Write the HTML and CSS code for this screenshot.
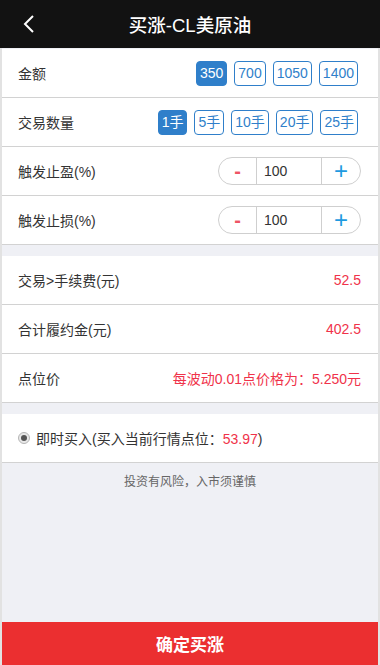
FILE: index.html
```html
<!DOCTYPE html>
<html lang="zh-CN">
<head>
<meta charset="utf-8">
<meta name="viewport" content="width=device-width, initial-scale=1">
<title>买涨-CL美原油</title>
<link rel="stylesheet" href="styles.css">
</head>
<body>
<div class="page">
  <header class="topbar">
    <span class="back">
      <svg width="12" height="20" viewBox="0 0 12 20"><path d="M10 2 L2 10 L10 18" fill="none" stroke="#fff" stroke-width="2"/></svg>
    </span>
    <h1 class="title">买涨-CL美原油</h1>
  </header>
  <main class="main">
    <section class="group">
      <div class="row">
        <span class="label">金额</span>
        <div class="chips">
          <span class="chip active">350</span>
          <span class="chip">700</span>
          <span class="chip">1050</span>
          <span class="chip">1400</span>
        </div>
      </div>
      <div class="row">
        <span class="label">交易数量</span>
        <div class="chips">
          <span class="chip active">1手</span>
          <span class="chip">5手</span>
          <span class="chip">10手</span>
          <span class="chip">20手</span>
          <span class="chip">25手</span>
        </div>
      </div>
      <div class="row">
        <span class="label">触发止盈(%)</span>
        <div class="stepper">
          <span class="step minus">-</span>
          <span class="step-value">100</span>
          <span class="step plus">+</span>
        </div>
      </div>
      <div class="row">
        <span class="label">触发止损(%)</span>
        <div class="stepper">
          <span class="step minus">-</span>
          <span class="step-value">100</span>
          <span class="step plus">+</span>
        </div>
      </div>
    </section>
    <section class="group">
      <div class="row">
        <span class="label">交易&gt;手续费(元)</span>
        <span class="value">52.5</span>
      </div>
      <div class="row">
        <span class="label">合计履约金(元)</span>
        <span class="value">402.5</span>
      </div>
      <div class="row">
        <span class="label">点位价</span>
        <span class="value">每波动0.01点价格为：5.250元</span>
      </div>
    </section>
    <section class="group">
      <div class="row radio-row">
        <span class="radio"><span class="radio-dot"></span></span>
        <span class="label">即时买入(买入当前行情点位：<span class="red">53.97</span>)</span>
      </div>
    </section>
    <p class="notice">投资有风险，入市须谨慎</p>
    <button class="submit">确定买涨</button>
  </main>
</div>
</body>
</html>
```
FILE: styles.css
```css
* { box-sizing: border-box; }
html, body { margin: 0; padding: 0; }
body {
  font-family: "Liberation Sans", "Noto Sans CJK SC", sans-serif;
  background: #eff0f5;
  color: #333;
}
.page {
  display: flex;
  flex-direction: column;
  min-height: 100vh;
}
.topbar {
  height: 48px;
  background: #121212;
  display: flex;
  align-items: center;
  justify-content: center;
  position: relative;
}
.back {
  position: absolute;
  left: 23px;
  top: 14px;
  display: flex;
}
.title {
  margin: 0;
  color: #fff;
  font-size: 18.5px;
  font-weight: 500;
}
.main {
  flex: 1;
  display: flex;
  flex-direction: column;
  border-left: 2px solid #e2e2e2;
  border-right: 2px solid #e2e2e2;
}
.group {
  background: #fff;
  margin-bottom: 11px;
}
.group:first-child { margin-top: 1px; }
.row {
  height: 49px;
  border-bottom: 1px solid #d2d2d2;
  display: flex;
  align-items: center;
  justify-content: space-between;
  padding: 0 17px 0 16px;
}
.label {
  font-size: 14px;
  color: #333;
}
.chips {
  display: flex;
  gap: 7px;
  margin-right: 3px;
}
.chip {
  height: 25px;
  line-height: 23px;
  padding: 0 3px;
  border: 1px solid #2f7fca;
  border-radius: 4px;
  color: #2f7fca;
  font-size: 14px;
}
.chip.active {
  background: #2f7fca;
  color: #fff;
}
.stepper {
  width: 143px;
  height: 28px;
  border: 1px solid #cfcfcf;
  border-radius: 14px;
  display: flex;
  align-items: stretch;
}
.step {
  width: 37px;
  display: flex;
  align-items: center;
  justify-content: center;
}
.minus {
  color: #ee5565;
  font-size: 20px;
  font-weight: bold;
}
.plus {
  color: #1e9ae0;
  font-size: 24px;
  width: 38px;
}
.step-value {
  flex: 1;
  border-left: 1px solid #cfcfcf;
  border-right: 1px solid #cfcfcf;
  display: flex;
  align-items: center;
  padding-left: 7px;
  font-size: 14px;
  color: #333;
}
.value {
  font-size: 14px;
  color: #f0324a;
}
.red { color: #f0324a; }
.radio-row {
  justify-content: flex-start;
  gap: 6px;
  padding-left: 16px;
}
.radio {
  width: 12px;
  height: 12px;
  border-radius: 50%;
  border: 1px solid #b5b5b5;
  background: #e8e8e8;
  display: flex;
  align-items: center;
  justify-content: center;
}
.radio-dot {
  width: 6px;
  height: 6px;
  border-radius: 50%;
  background: #555;
}
.notice {
  margin: -2px 0 0;
  text-align: center;
  font-size: 12px;
  color: #666;
}
.submit {
  margin-top: auto;
  height: 43px;
  width: 100%;
  border: 0;
  background: #eb2f30;
  color: #fff;
  font-family: "Noto Sans CJK SC", sans-serif;
  font-size: 17px;
  font-weight: bold;
}
```
